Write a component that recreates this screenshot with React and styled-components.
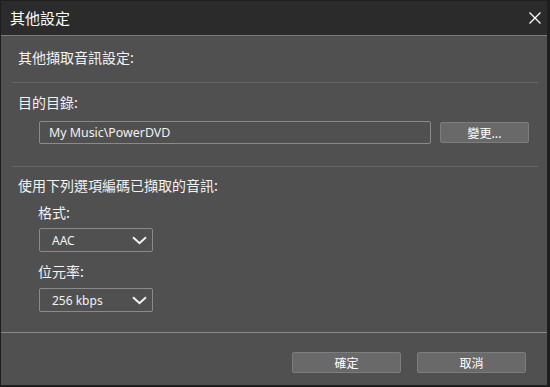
import React from "react";
import styled, { createGlobalStyle } from "styled-components";

const Global = createGlobalStyle`
  html, body { margin: 0; padding: 0; background: #1e1e1e; }
  body { font-family: "Noto Sans", "Noto Sans CJK TC", sans-serif; }
  * { box-sizing: border-box; }
`;

const Window = styled.div`
  width: 550px;
  height: 387px;
  display: flex;
  flex-direction: column;
  border: 1px solid #1e1e1e;
  border-right-width: 3px;
  border-bottom-width: 2px;
  background: #505050;
  color: #f2f2f2;
`;

const TitleBar = styled.div`
  height: 35px;
  flex: none;
  display: flex;
  align-items: center;
  justify-content: space-between;
  padding: 0 4px 0 9px;
  background: #2b2b2b;
  border-bottom: 1px solid #7c7c7c;
`;

const Title = styled.div`
  font-family: "Noto Sans CJK TC", sans-serif;
  font-size: 15px;
  line-height: 20px;
  color: #ffffff;
`;

const CloseButton = styled.div`
  width: 12px;
  height: 12px;
  display: flex;
  margin-right: 2px;
`;

const Body = styled.div`
  flex: 1;
  display: flex;
  flex-direction: column;
  padding: 11px 9px 0 11px;
`;

const Heading = styled.div`
  font-family: "Noto Sans CJK TC", sans-serif;
  font-size: 14px;
  line-height: 20px;
  padding-left: ${(p) => p.$indent || 6}px;
  margin-top: ${(p) => p.$top || 0}px;
  color: #f2f2f2;
`;

const Separator = styled.div`
  height: 1px;
  background: #666666;
  margin-top: ${(p) => p.$top}px;
`;

const Row = styled.div`
  display: flex;
  align-items: center;
  gap: 9px;
  padding-left: 27px;
  margin-top: ${(p) => p.$top}px;
`;

const TextField = styled.div`
  width: 392px;
  height: 23px;
  border: 1px solid #8a8a8a;
  border-radius: 2px;
  padding: 0 9px;
  display: flex;
  align-items: center;
  font-size: 12.4px;
  color: #f2f2f2;
`;

const Button = styled.div`
  width: ${(p) => p.$w}px;
  height: 21px;
  background: #696969;
  border: 1px solid #7d7d7d;
  border-radius: 2px;
  display: flex;
  align-items: center;
  justify-content: center;
  font-family: "Noto Sans CJK TC", sans-serif;
  font-size: 12px;
  line-height: 16px;
  color: #ffffff;
`;

const Select = styled.div`
  width: 114px;
  height: 24px;
  margin-left: 27px;
  margin-top: ${(p) => p.$top}px;
  border: 1px solid #8a8a8a;
  border-radius: 2px;
  padding: 0 5px 0 12px;
  display: flex;
  align-items: center;
  justify-content: space-between;
  font-size: 12px;
  color: #f2f2f2;
`;

const Footer = styled.div`
  flex: none;
  border-top: 1px solid #8a8a8a;
  display: flex;
  justify-content: flex-end;
  gap: 16px;
  padding: 19px 21px 12px 0;
`;

const Chevron = () => (
  <svg width="15" height="9" viewBox="0 0 15 9">
    <path d="M1 1.2 L7.5 7.2 L14 1.2" fill="none" stroke="#f2f2f2" strokeWidth="2" />
  </svg>
);

const CloseIcon = () => (
  <svg width="12" height="12" viewBox="0 0 12 12">
    <path d="M0.5 0.5 L11.5 11.5 M11.5 0.5 L0.5 11.5" stroke="#ffffff" strokeWidth="1.3" />
  </svg>
);

export default function App() {
  return (
    <>
      <Global />
      <Window>
        <TitleBar>
          <Title>其他設定</Title>
          <CloseButton>
            <CloseIcon />
          </CloseButton>
        </TitleBar>
        <Body>
          <Heading>其他擷取音訊設定:</Heading>
          <Separator $top={15} />
          <Heading $top={9}>目的目錄:</Heading>
          <Row $top={9}>
            <TextField>My Music\PowerDVD</TextField>
            <Button $w={89}>變更...</Button>
          </Row>
          <Separator $top={22} />
          <Heading $top={8}>使用下列選項編碼已擷取的音訊:</Heading>
          <Heading $indent={26} $top={7}>格式:</Heading>
          <Select $top={6}>
            <span>AAC</span>
            <Chevron />
          </Select>
          <Heading $indent={26} $top={9}>位元率:</Heading>
          <Select $top={7}>
            <span>256 kbps</span>
            <Chevron />
          </Select>
        </Body>
        <Footer>
          <Button $w={109}>確定</Button>
          <Button $w={109}>取消</Button>
        </Footer>
      </Window>
    </>
  );
}
